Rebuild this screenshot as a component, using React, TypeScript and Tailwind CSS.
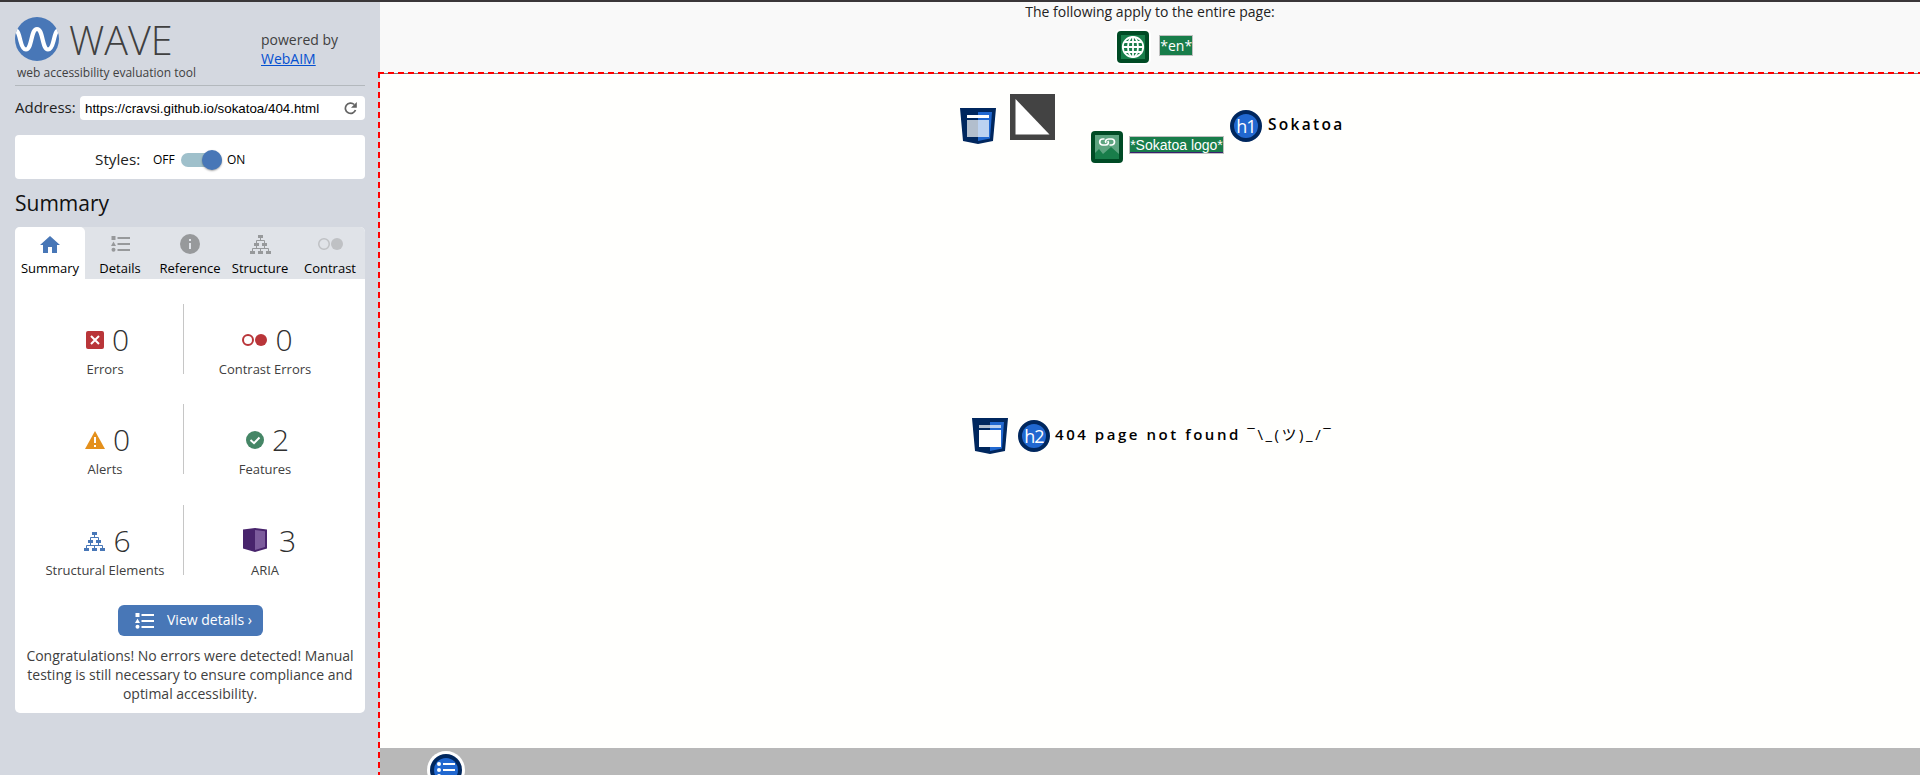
import React from "react";

const sans = "font-['Open_Sans','Noto_Sans_CJK_JP',sans-serif]";

function Logo() {
  return (
    <svg width="44" height="44" viewBox="0 0 44 44" className="block">
      <defs>
        <clipPath id="disc"><circle cx="22" cy="22" r="22" /></clipPath>
      </defs>
      <circle cx="22" cy="22" r="22" fill="#4877b7" />
      <path d="M0 13 C3 13 4 18 5.500 24 C7 30 8.500 32.500 11 32.500 C14 32.500 15 28 16.500 22 C18 16 19 12 22 12 C25 12 26 16 27.500 22 C29 28 30 32.500 33 32.500 C35.500 32.500 37 30 38.500 24 C40 18 41 13 44 13" fill="none" stroke="#fff" strokeWidth="4.200" clipPath="url(#disc)" />
    </svg>
  );
}

function ListIcon({ color }: { color: string }) {
  return (
    <svg width="19" height="16" viewBox="0 0 19 16" fill={color} className="block shrink-0">
      <rect x="0.500" y="0" width="4" height="4" />
      <path d="M2.500 5.500 L5 10 H0 Z" />
      <circle cx="2.500" cy="13.800" r="2" />
      <rect x="6.500" y="1" width="12.500" height="2" />
      <rect x="6.500" y="7" width="12.500" height="2" />
      <rect x="6.500" y="13" width="12.500" height="2" />
    </svg>
  );
}

function TreeIcon({ color }: { color: string }) {
  return (
    <svg width="21" height="19" viewBox="0 0 21 19" fill={color} className="block shrink-0">
      <rect x="8" y="0" width="5" height="3" />
      <rect x="4" y="8" width="5" height="3" />
      <rect x="12" y="8" width="5" height="3" />
      <rect x="0" y="16" width="5" height="3" />
      <rect x="8" y="16" width="5" height="3" />
      <rect x="16" y="16" width="5" height="3" />
      <path d="M10.500 3V5.500M6.500 8V5.500H14.500V8M6.500 11V13.500M14.500 11V13.500M2.500 16V13.500H18.500V16M10.500 13.500V16" fill="none" stroke={color} />
    </svg>
  );
}

function HomeIcon() {
  return (
    <svg width="20" height="17" viewBox="0 0 20 17" fill="#4877b7" className="block">
      <path d="M10 0 L20 9 H17 V17 H12 V11 H8 V17 H3 V9 H0 Z" />
    </svg>
  );
}

function InfoIcon() {
  return (
    <svg width="20" height="20" viewBox="0 0 20 20" className="block">
      <circle cx="10" cy="10" r="10" fill="#97999b" />
      <rect x="9" y="5" width="2" height="2" fill="#e0e3e8" />
      <rect x="9" y="9" width="2" height="6" fill="#e0e3e8" />
    </svg>
  );
}

function ContrastIcon({ color, strokeWidth }: { color: string; strokeWidth: number }) {
  return (
    <svg width="25" height="12" viewBox="0 0 25 12" className="block shrink-0">
      <circle cx="6" cy="6" r={6 - strokeWidth / 2} fill="none" stroke={color} strokeWidth={strokeWidth} />
      <circle cx="19" cy="6" r="6" fill={color} />
    </svg>
  );
}

function ErrorIcon() {
  return (
    <svg width="18" height="18" viewBox="0 0 18 18" className="block">
      <rect width="18" height="18" rx="2" fill="#b93539" />
      <path d="M5 5 L13 13 M13 5 L5 13" stroke="#fff" strokeWidth="2" />
    </svg>
  );
}

function AlertIcon() {
  return (
    <svg width="20" height="18" viewBox="0 0 20 18" className="block">
      <path d="M10 0 L20 18 H0 Z" fill="#e4901c" />
      <rect x="9" y="6" width="2" height="6" fill="#fff" />
      <rect x="9" y="14" width="2" height="2" fill="#fff" />
    </svg>
  );
}

function CheckIcon() {
  return (
    <svg width="18" height="18" viewBox="0 0 18 18" className="block">
      <circle cx="9" cy="9" r="9" fill="#458666" />
      <path d="M4.500 9 L8 12.200 L13.500 6.500" fill="none" stroke="#fff" strokeWidth="2" />
    </svg>
  );
}

function AriaIcon() {
  return (
    <svg width="24" height="24" viewBox="0 0 24 24" className="-mt-[2px] block">
      <path d="M0 1.500 L12 0 L24 1.500 V20.500 L12 24 L0 20.500 Z" fill="#48246c" />
      <path d="M12 2 L22 3.300 V19 L12 22 Z" fill="#7c5c9c" />
    </svg>
  );
}

function Shield({ variant }: { variant: "header" | "main" }) {
  const header = variant === "header";
  return (
    <svg width="36" height="36" viewBox="0 0 36 36" className="block shrink-0">
      <path d="M0 0 H36 L33 33 L18 36 L3 33 Z" fill="#00275e" />
      <path d="M18 4 H32 L30 30.500 L18 33 Z" fill="#2168d0" />
      <rect x="7" y="7" width="22" height="3" fill={header ? "#fff" : "#b2becd"} />
      {header ? null : <rect x="18" y="7" width="11" height="3" fill="#bcd2f1" />}
      <rect x="7" y="12" width="11" height="17" fill={header ? "#b2becd" : "#fff"} />
      <rect x="18" y="12" width="11" height="17" fill={header ? "#bcd2f1" : "#fff"} />
    </svg>
  );
}

function Heading({ label }: { label: string }) {
  return (
    <div className="flex h-8 w-8 shrink-0 items-center justify-center rounded-full border-4 border-[#00275e] bg-[#2168d0] text-[18px] leading-none tracking-[-1px] text-white">
      {label}
    </div>
  );
}

function GlobeIcon() {
  return (
    <div className="h-8 w-8 rounded-[4px] border-4 border-[#004b25] bg-[#187d4a] shadow-[0_0_0_2px_#fff]">
      <svg width="24" height="24" viewBox="0 0 24 24" fill="none" stroke="#fff" strokeWidth="1.800" className="block">
        <circle cx="12" cy="12" r="10.200" />
        <ellipse cx="12" cy="12" rx="5" ry="10.200" />
        <path d="M12 2V22M2 12H22M3.500 7H20.500M3.500 17H20.500" />
      </svg>
    </div>
  );
}

function LinkedImageIcon() {
  return (
    <svg width="32" height="32" viewBox="0 0 32 32" className="block shrink-0">
      <rect width="32" height="32" rx="4" fill="#004b25" />
      <rect x="4" y="4" width="24" height="24" fill="#5da480" />
      <path d="M4 22 L8 18 L12 23 L20 16 L28 23 V28 H4 Z" fill="#187d4a" />
      <g fill="none" stroke="#fff" strokeWidth="1.700">
        <path d="M13.500 8 H11.700 A3 3 0 0 0 11.700 14 H14.500 C17 14 18.200 12 16.800 10" />
        <path d="M18.500 14 H20.500 A3 3 0 0 0 20.500 8 H17.600 C15 8 13.800 10 15 11.800" />
      </g>
    </svg>
  );
}

function ThemeIcon() {
  return (
    <svg width="45" height="46" viewBox="0 0 45 46" className="block shrink-0">
      <rect width="45" height="46" fill="#434343" />
      <path d="M5.500 5 L39.500 40.500 H5.500 Z" fill="#fff" />
    </svg>
  );
}

function ReloadIcon() {
  return (
    <svg width="13" height="13" viewBox="0 0 13 13" className="block">
      <path d="M10.200 2.500 A5.200 5.200 0 1 0 11.500 8" fill="none" stroke="#636363" strokeWidth="1.700" />
      <path d="M12.800 0 V5.800 H7 Z" fill="#636363" />
    </svg>
  );
}

function OrderedListBadge() {
  return (
    <svg width="38" height="38" viewBox="0 0 38 38" className="block shrink-0">
      <circle cx="19" cy="19" r="19" fill="#fff" />
      <circle cx="19" cy="19" r="16" fill="#00275e" />
      <circle cx="19" cy="19" r="12" fill="#2168d0" />
      <g fill="#fff">
        <circle cx="12" cy="13" r="2" />
        <circle cx="12" cy="19" r="2" />
        <circle cx="12" cy="25" r="2" />
        <rect x="16" y="12" width="12" height="2" />
        <rect x="16" y="18" width="12" height="2" />
        <rect x="16" y="24" width="12" height="2" />
      </g>
    </svg>
  );
}

function Tab({ label, active, children }: { label: string; active?: boolean; children: React.ReactNode }) {
  return (
    <div className={active ? "flex w-[70px] flex-col items-center rounded-t-[5px] bg-white" : "flex w-[70px] flex-col items-center"}>
      <div className="flex h-[34px] items-center">{children}</div>
      <span className="-mt-[2px] whitespace-nowrap text-[13px] leading-[18px] text-black">{label}</span>
    </div>
  );
}

function Stat({ value, label, gap, children }: { value: string; label: string; gap: string; children: React.ReactNode }) {
  return (
    <div className="flex w-40 flex-col items-center">
      <div className={"mt-[18px] flex h-9 items-center " + gap}>
        {children}
        <span className="text-[30px] leading-9 font-light text-[#303030]">{value}</span>
      </div>
      <span className="mt-[2px] whitespace-nowrap text-[13px] leading-[18px] text-[#404040]">{label}</span>
    </div>
  );
}

function StatRow({ height, children }: { height: string; children: React.ReactNode }) {
  const [left, right] = React.Children.toArray(children);
  return (
    <div className={"flex pl-[10px] " + height}>
      {left}
      <div className="-ml-[2px] mr-[1px] h-[70px] w-px bg-[#c6c6c6]" />
      {right}
    </div>
  );
}

function Sidebar() {
  return (
    <aside className="flex w-[380px] shrink-0 flex-col bg-[#d4d8e0] pl-[15px] text-[#404040]">
      <header className="flex h-[84px] w-[350px] justify-between border-b border-[#b3b8bd]">
        <div>
          <div className="flex items-start pt-[15px]">
            <Logo />
            <span className="ml-[10px] -mt-[1px] h-[48px] text-[39.5px] leading-[48px] font-light">WAVE</span>
          </div>
          <p className="ml-[2px] mt-[1px] text-[12px] leading-[16px] whitespace-nowrap">web accessibility evaluation tool</p>
        </div>
        <p className="w-[104px] pt-[28px] text-[14px] leading-[19px]">
          powered by
          <br />
          <span className="text-[#0450d0] underline">WebAIM</span>
        </p>
      </header>

      <div className="mt-[10px] flex h-6 w-[350px] items-center">
        <span className="-mt-[2px] w-[65px] text-[15px] leading-6 text-[#222]">Address:</span>
        <div className="flex h-6 flex-1 items-center justify-between rounded-[4px] bg-white pr-[8px] pl-[5px]">
          <span className="pt-px font-['Liberation_Sans',sans-serif] text-[13.333px] text-black">https://cravsi.github.io/sokatoa/404.html</span>
          <ReloadIcon />
        </div>
      </div>

      <div className="mt-[15px] flex h-[44px] w-[350px] items-center rounded-[4px] bg-white pt-[5px] pl-20 text-[#222]">
        <span className="-mt-px w-[58px] text-[15.300px] leading-5">Styles:</span>
        <span className="w-[28px] text-[12px] text-black">OFF</span>
        <span className="flex h-[14px] w-[41px] items-center justify-end rounded-full bg-[#9fc0cb]">
          <span className="h-5 w-5 rounded-full bg-[#4877b7] shadow-[0_1px_2px_rgba(0,0,0,0.35)]" />
        </span>
        <span className="ml-[5px] text-[12px] text-black">ON</span>
      </div>

      <h1 className="mt-[9px] h-[39px] text-[21px] leading-[30px] text-[#111]">Summary</h1>

      <section className="h-[486px] w-[350px] rounded-[5px] bg-white">
        <nav className="flex h-[52px] rounded-t-[5px] bg-[#e0e3e8]">
          <Tab label="Summary" active><HomeIcon /></Tab>
          <Tab label="Details"><ListIcon color="#97999b" /></Tab>
          <Tab label="Reference"><InfoIcon /></Tab>
          <Tab label="Structure"><TreeIcon color="#97999b" /></Tab>
          <Tab label="Contrast"><ContrastIcon color="#bfc1c4" strokeWidth={1.5} /></Tab>
        </nav>
        <div className="pt-[25px]">
          <StatRow height="h-[100px]">
            <Stat value="0" label="Errors" gap="gap-2 pl-[5px]"><ErrorIcon /></Stat>
            <Stat value="0" label="Contrast Errors" gap="gap-2 pl-[5px]"><ContrastIcon color="#b93539" strokeWidth={2} /></Stat>
          </StatRow>
          <StatRow height="h-[101px]">
            <Stat value="0" label="Alerts" gap="gap-2 pl-[5px]"><AlertIcon /></Stat>
            <Stat value="2" label="Features" gap="gap-2 pl-[5px]"><CheckIcon /></Stat>
          </StatRow>
          <StatRow height="h-[101px]">
            <Stat value="6" label="Structural Elements" gap="gap-2 pl-[5px]"><TreeIcon color="#4877b7" /></Stat>
            <Stat value="3" label="ARIA" gap="gap-3 pl-[9px]"><AriaIcon /></Stat>
          </StatRow>
        </div>
        <div className="ml-[103px] -mt-[1px] flex h-[31px] w-[145px] items-center rounded-[6px] bg-[#4877b7] pl-[17px]">
          <ListIcon color="#fff" />
          <span className="-mt-[2px] ml-[13px] whitespace-nowrap text-[14px] text-white">View details ›</span>
        </div>
        <p className="mt-[10px] text-center text-[14px] leading-[19px] text-[#404040]">
          Congratulations! No errors were detected! Manual
          <br />
          testing is still necessary to ensure compliance and
          <br />
          optimal accessibility.
        </p>
      </section>
    </aside>
  );
}

function PageView() {
  return (
    <main className="flex flex-1 flex-col bg-[#fffffd]">
      <div className="flex h-[72px] flex-col items-center bg-[#f9f9f9] pt-px">
        <div className="h-[70px]">
          <p className="-mt-[1px] text-[14px] leading-[20px] text-[#222]">The following apply to the entire page:</p>
          <div className="mt-[9px] flex pl-[92px]">
            <GlobeIcon />
            <span className="mt-[4px] ml-[10px] h-[21px] border border-[#c0c0c0] bg-[#187d4a] text-[14px] leading-[19px] text-white">*en*</span>
          </div>
        </div>
      </div>
      <div className="-mt-px h-px bg-[#777]" />

      <div className="flex h-[344px] pl-[580px]">
        <div className="pt-[34px]"><Shield variant="header" /></div>
        <div className="ml-[14px] pt-[20px]"><ThemeIcon /></div>
        <div className="ml-[36px] pt-[57px]"><LinkedImageIcon /></div>
        <div className="ml-[6px] pt-[62px]">
          <span className="flex h-[18px] w-[95px] justify-center border border-[#c0c0c0] bg-[#187d4a] font-['Liberation_Sans',sans-serif] text-[14px] leading-[17px] whitespace-nowrap text-white underline decoration-[#3a1f70] underline-offset-[2px]">*Sokatoa logo*</span>
        </div>
        <div className="ml-[6px] pt-[36px]"><Heading label="h1" /></div>
        <span className="ml-[6px] pt-[38px] text-[15.500px] leading-6 font-semibold tracking-[2.300px] text-black">Sokatoa</span>
      </div>

      <div className="flex h-[330px] pl-[592px]">
        <Shield variant="main" />
        <div className="mt-[2px] ml-[10px]"><Heading label="h2" /></div>
        <p className="mt-[4px] ml-[5px] whitespace-nowrap text-[15px] leading-6 font-semibold tracking-[2.550px] text-black">
          404 page not found <span className="font-normal">¯\_(ツ)_/¯</span>
        </p>
      </div>

      <footer className="h-[27px] overflow-hidden bg-[#b8b8b8] pt-[3px] pl-[47px]">
        <OrderedListBadge />
      </footer>
    </main>
  );
}

export default function App() {
  return (
    <div className={"relative flex h-[775px] w-[1920px] flex-col overflow-hidden " + sans}>
      <div className="h-[2px] shrink-0 bg-[#3a3739]" />
      <div className="flex h-[773px]">
        <Sidebar />
        <PageView />
      </div>
      <div className="pointer-events-none absolute top-[72px] left-[378px] h-[2px] w-[1542px] bg-[repeating-linear-gradient(90deg,#ff0000_0_6px,transparent_6px_10px)]" />
      <div className="pointer-events-none absolute top-[72px] left-[378px] h-[703px] w-[2px] bg-[repeating-linear-gradient(180deg,#ff0000_0_6px,transparent_6px_10px)]" />
    </div>
  );
}
